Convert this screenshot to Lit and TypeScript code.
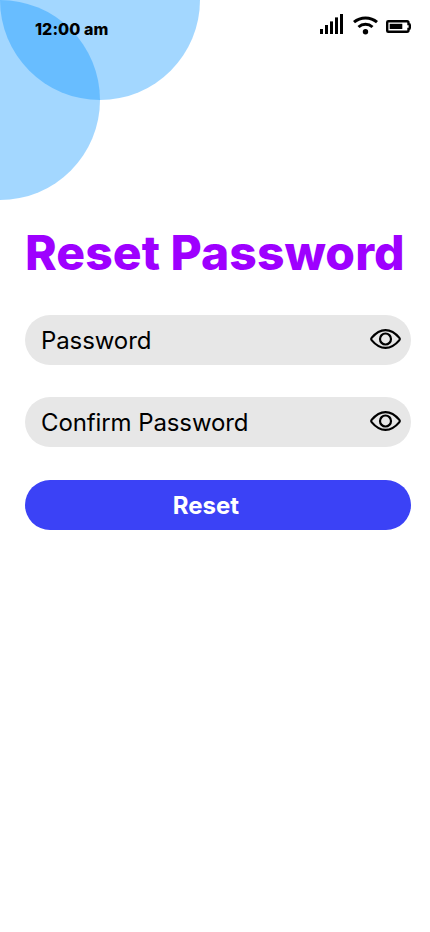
import { LitElement, html, css, svg } from "lit";
import { customElement, property } from "lit/decorators.js";

@customElement("password-field")
class PasswordField extends LitElement {
  @property() label = "";
  static styles = css`
    :host { display: block; }
    .field { box-sizing: border-box; height: 50px; border-radius: 25px; background: #e7e7e7; display: flex; align-items: center; justify-content: space-between; padding: 0 9px 0 16px; font: 400 24px/29px Inter, sans-serif; letter-spacing: -0.1px; color: #000; }
    .eye { display: block; width: 33px; height: 22px; margin-bottom: 2px; }
  `;
  render() {
    return html`<div class="field"><span>${this.label}</span>
      <svg class="eye" viewBox="0 0 33 22" fill="none" stroke="#000" stroke-width="2.200" stroke-linejoin="round">
        <path d="M2.600 9.900C6.300 5.500 11 2.100 16.500 2.100S26.700 5.500 30.400 9.900Q31.300 11 30.400 12.100C26.700 16.500 22 19.900 16.500 19.900S6.300 16.500 2.600 12.100Q1.700 11 2.600 9.900Z" />
        <circle cx="16.500" cy="11" r="5.500" />
      </svg></div>`;
  }
}

@customElement("app-root")
class AppRoot extends LitElement {
  static styles = css`
    :host { display: block; position: relative; width: 430px; height: 932px; overflow: hidden; background: #fff; font-family: Inter, sans-serif; color: #000; }
    .bubbles { position: absolute; left: 0; top: 0; width: 200px; height: 200px; }
    .status { position: relative; box-sizing: border-box; height: 60px; padding: 0 19px 0 35px; display: flex; justify-content: space-between; align-items: center; }
    .time { font-size: 16px; line-height: 19px; font-weight: 800; letter-spacing: 0.06px; margin-bottom: 2px; }
    .icons { width: 92px; height: 24px; margin-bottom: 10px; }
    .content { position: relative; padding: 164px 19px 0 25px; display: flex; flex-direction: column; }
    h1 { margin: 0 0 33px; font-size: 48px; line-height: 58px; font-weight: 800; letter-spacing: 0.05px; color: #9e00ff; white-space: nowrap; }
    password-field { margin-bottom: 32px; }
    button { margin-top: 1px; height: 50px; border: 0; border-radius: 25px; background: #3b42f6; color: #fff; font: 700 24px/29px Inter, sans-serif; padding: 0 24px 0 0; }
  `;
  render() {
    return html`
      <svg class="bubbles" viewBox="0 0 200 200" fill="#0090ff" fill-opacity=".36"><circle cx="100" r="100" /><circle cy="100" r="100" /></svg>
      <div class="status"><span class="time">12:00 am</span>
        <svg class="icons" viewBox="0 0 92 24">
          ${[5, 9, 12.6, 16.6, 20].map((h, i) => svg`<rect x=${1 + i * 5} y=${21 - h} width="3" height=${h} />`)}
          <circle cx="46.500" cy="18.800" r="2.700" />
          <g fill="none" stroke="#000" stroke-width="3">
            <path d="M35 9.200C41.500 3.600 51.500 3.600 58 9.200M39.500 14C43.600 10.300 49.400 10.300 53.500 14" />
            <path d="M69.200 8.200H88q1.500 0 1.500 1.500v1.300q1.300 0 1.300 1v3q0 1-1.300 1v1.300q0 1.500-1.500 1.500H69.200q-1 0-1-1V9.200q0-1 1-1Z" stroke-width="2.400" />
          </g>
          <rect x="70.700" y="10.800" width="12.600" height="5.200" />
        </svg>
      </div>
      <main class="content">
        <h1>Reset Password</h1>
        <password-field label="Password"></password-field>
        <password-field label="Confirm Password"></password-field>
        <button>Reset</button>
      </main>`;
  }
}
